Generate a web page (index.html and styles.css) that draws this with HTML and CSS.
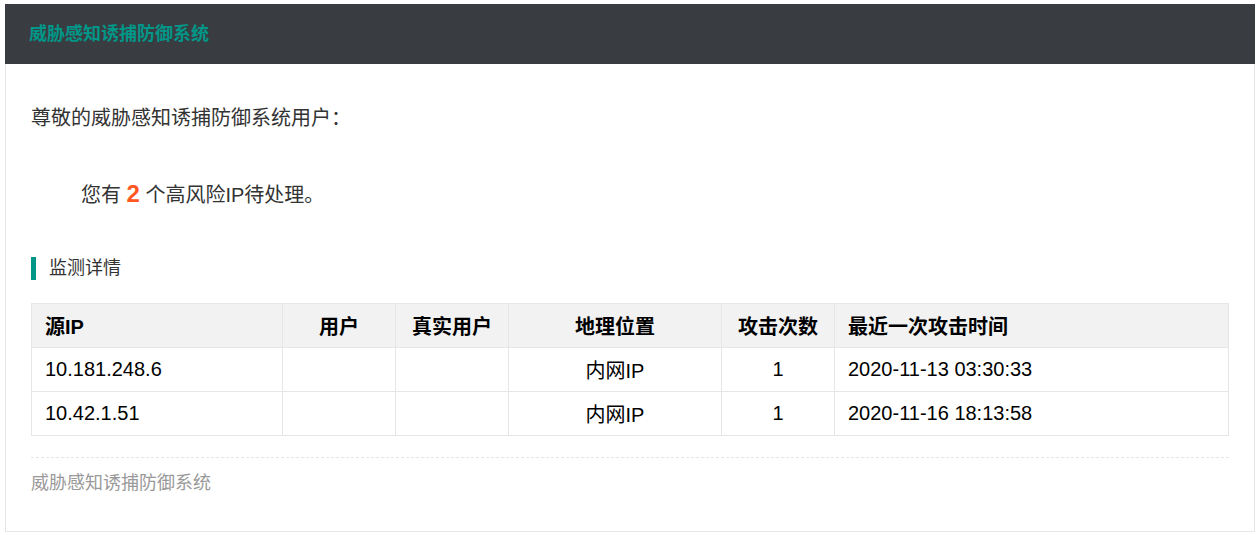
FILE: index.html
```html
<!DOCTYPE html>
<html lang="zh-CN">
<head>
<meta charset="utf-8">
<title>威胁感知诱捕防御系统</title>
<link rel="stylesheet" href="styles.css">
</head>
<body>
<div class="mail">
  <div class="mail-header">威胁感知诱捕防御系统</div>
  <div class="mail-body">
    <p class="greeting">尊敬的威胁感知诱捕防御系统用户：</p>
    <p class="notice">您有 <span class="count">2</span> 个高风险IP待处理。</p>
    <div class="section-title">监测详情</div>
    <table class="detail">
      <colgroup>
        <col class="c-ip"><col class="c-user"><col class="c-real"><col class="c-geo"><col class="c-num"><col class="c-time">
      </colgroup>
      <thead>
        <tr>
          <th class="left">源IP</th>
          <th>用户</th>
          <th>真实用户</th>
          <th>地理位置</th>
          <th>攻击次数</th>
          <th class="left">最近一次攻击时间</th>
        </tr>
      </thead>
      <tbody>
        <tr>
          <td class="left">10.181.248.6</td>
          <td></td>
          <td></td>
          <td>内网IP</td>
          <td>1</td>
          <td class="left">2020-11-13 03:30:33</td>
        </tr>
        <tr>
          <td class="left">10.42.1.51</td>
          <td></td>
          <td></td>
          <td>内网IP</td>
          <td>1</td>
          <td class="left">2020-11-16 18:13:58</td>
        </tr>
      </tbody>
    </table>
    <div class="footer">威胁感知诱捕防御系统</div>
  </div>
</div>
</body>
</html>
```

FILE: styles.css
```css
html, body {
  margin: 0;
  padding: 0;
  background: #fff;
}

body {
  font-family: "Liberation Sans", "Noto Sans CJK SC", sans-serif;
  color: #333;
}

.mail {
  margin: 4px 2px 0 5px;
}

.mail-header {
  height: 60px;
  line-height: 60px;
  background: #393d41;
  color: #009688;
  font-size: 18px;
  font-weight: bold;
  padding-left: 24px;
}

.mail-body {
  border: 1px solid #e6e6e6;
  border-top: none;
  padding: 39px 25px 33px 25px;
}

.greeting {
  margin: 0;
  font-size: 20px;
  line-height: 30px;
}

.notice {
  margin: 46px 0 0 0;
  padding-left: 50px;
  font-size: 20px;
  line-height: 30px;
}

.count {
  color: #ff5722;
  font-weight: bold;
  font-size: 24px;
}

.section-title {
  margin-top: 47px;
  border-left: 5px solid #009688;
  padding-left: 13px;
  font-size: 18px;
  line-height: 23px;
}

.detail {
  margin-top: 23px;
  width: 100%;
  border-collapse: collapse;
  table-layout: fixed;
  color: #000;
  font-size: 20px;
}

.c-ip { width: 251px; }
.c-user { width: 113px; }
.c-real { width: 113px; }
.c-geo { width: 213px; }
.c-num { width: 113px; }

.detail th,
.detail td {
  border: 1px solid #e6e6e6;
  height: 44px;
  padding: 0 13px;
  text-align: center;
  box-sizing: border-box;
  white-space: nowrap;
}

.detail th {
  background: #f2f2f2;
  font-weight: bold;
}

.detail .left {
  text-align: left;
}

.footer {
  margin-top: 21px;
  border-top: 1px dashed #e6e6e6;
  padding-top: 10px;
  color: #999;
  font-size: 18px;
  line-height: 30px;
}
```
